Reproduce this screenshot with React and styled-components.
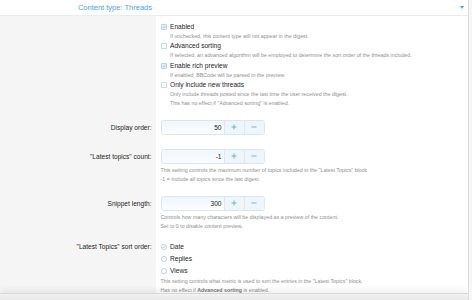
import React from "react";
import styled, { createGlobalStyle } from "styled-components";

const GlobalStyle = createGlobalStyle`
  html, body {
    margin: 0;
    padding: 0;
    background: #f6f6f6;
    font-family: "Liberation Sans", Arial, sans-serif;
  }
`;

const BLUE = "#47a5e6";

const Panel = styled.div`
  width: 468px;
  height: 300px;
  background: #fff;
  border-right: 1px solid #dcdcdc;
  display: flex;
  flex-direction: column;
  overflow: hidden;
`;

const Header = styled.div`
  display: grid;
  grid-template-columns: 156px 1fr;
  align-items: center;
  height: 15px;
  border-bottom: 1px solid #ececec;
  flex-shrink: 0;
`;

const HeaderTitle = styled.div`
  text-align: right;
  padding-right: 4px;
  font-size: 7.5px;
  color: ${BLUE};
`;

const Caret = styled.div`
  justify-self: end;
  margin-right: 4px;
  width: 0;
  height: 0;
  border-left: 2.5px solid transparent;
  border-right: 2.5px solid transparent;
  border-top: 3px solid ${BLUE};
`;

const Body = styled.div`
  flex: 1;
  background: linear-gradient(to right, #f5f5f5 156px, #fff 156px);
  overflow: hidden;
`;

const Row = styled.div`
  display: grid;
  grid-template-columns: 156px 1fr;
  padding: ${(p) => p.$pt ?? 6}px 0 ${(p) => p.$pb ?? 6}px;
`;

const Label = styled.div`
  text-align: right;
  padding-right: 4.5px;
  font-size: 6.6px;
  line-height: ${(p) => p.$lh || 15}px;
  color: #1d1d1d;
`;

const Field = styled.div`
  padding-left: 4.5px;
`;

const Choice = styled.div`
  display: flex;
  align-items: center;
  font-size: 6.6px;
  line-height: ${(p) => p.$lh || 10}px;
  color: #1d1d1d;
  margin-top: ${(p) => p.$mt || 0}px;
`;

const Mark = styled.svg`
  width: 6px;
  height: 6px;
  margin-right: 3.5px;
  flex-shrink: 0;
`;

const Hint = styled.div`
  font-size: 5.3px;
  line-height: 9px;
  color: #8f8f8f;
  margin-left: ${(p) => p.$indent || 0}px;
  white-space: nowrap;

  b {
    font-weight: bold;
    color: #777;
  }
`;

const Spinner = styled.div`
  display: flex;
  width: 104px;
  height: 15px;
  box-sizing: border-box;
  border: 1px solid #dae5ef;
  border-radius: 2.5px;
  overflow: hidden;
  margin-bottom: 2px;
`;

const SpinValue = styled.div`
  flex: 1;
  text-align: right;
  padding-right: 2px;
  font-size: 6.6px;
  line-height: 13px;
  color: #222;
  background: linear-gradient(#f1f6fb, #fbfdff);
`;

const SpinButton = styled.div`
  width: 19px;
  display: flex;
  align-items: center;
  justify-content: center;
  background: #eef5fb;
  border-left: 1px solid #dde8f2;
`;

const Footer = styled.div`
  height: 6px;
  flex-shrink: 0;
  border-top: 1px solid #d8d8d8;
  background: linear-gradient(#f1f1f1, #e9e9e9);
  box-shadow: 0 -3px 6px rgba(0, 0, 0, 0.07);
  position: relative;
`;

const Checkbox = ({ checked }) => (
  <Mark viewBox="0 0 12 12">
    <rect x="0.75" y="0.75" width="10.5" height="10.5" rx="1.5"
      fill={checked ? "#e6f1fb" : "#fff"} stroke="#7db2e0" strokeWidth="1.1" />
    {checked && (
      <path d="M3.2 6.2 L5.2 8.1 L8.9 4" fill="none" stroke="#5a9fd8" strokeWidth="1.1" />
    )}
  </Mark>
);

const Radio = ({ checked }) => (
  <Mark viewBox="0 0 12 12">
    <circle cx="6" cy="6" r="5.2" fill="#fff" stroke="#7db2e0" strokeWidth="1.1" />
    {checked && (
      <path d="M3.4 6.1 L5.3 8 L8.7 4.2" fill="none" stroke="#5a9fd8" strokeWidth="1.1" />
    )}
  </Mark>
);

const Plus = () => (
  <svg width="6" height="6" viewBox="0 0 6 6">
    <path d="M3 0.5 V5.5 M0.5 3 H5.5" stroke={BLUE} strokeWidth="0.8" />
  </svg>
);

const Minus = () => (
  <svg width="6" height="6" viewBox="0 0 6 6">
    <path d="M0.5 3 H5.5" stroke={BLUE} strokeWidth="0.8" />
  </svg>
);

const NumberBox = ({ value }) => (
  <Spinner>
    <SpinValue>{value}</SpinValue>
    <SpinButton><Plus /></SpinButton>
    <SpinButton><Minus /></SpinButton>
  </Spinner>
);

const options = [
  {
    label: "Enabled",
    checked: true,
    hints: ["If unchecked, this content type will not appear in the digest."],
  },
  {
    label: "Advanced sorting",
    checked: false,
    hints: [
      "If selected, an advanced algorithm will be employed to determine the sort order of the threads included.",
    ],
  },
  {
    label: "Enable rich preview",
    checked: true,
    hints: ["If enabled, BBCode will be parsed in the preview."],
  },
  {
    label: "Only include new threads",
    checked: false,
    hints: [
      "Only include threads posted since the last time the user received the digest.",
      'This has no effect if "Advanced sorting" is enabled.',
    ],
  },
];

const sortOrders = [
  { label: "Date", checked: true },
  { label: "Replies", checked: false },
  { label: "Views", checked: false },
];

export default function App() {
  return (
    <>
      <GlobalStyle />
      <Panel>
        <Header>
          <HeaderTitle>Content type: Threads</HeaderTitle>
          <Caret />
        </Header>

        <Body>
          <Row>
            <Label />
            <Field>
              {options.map((o, i) => (
                <div key={o.label}>
                  <Choice $mt={i ? 0.3 : 0}>
                    <Checkbox checked={o.checked} />
                    {o.label}
                  </Choice>
                  {o.hints.map((h) => (
                    <Hint key={h} $indent={9.5}>{h}</Hint>
                  ))}
                </div>
              ))}
            </Field>
          </Row>

          <Row>
            <Label>Display order:</Label>
            <Field>
              <NumberBox value="50" />
            </Field>
          </Row>

          <Row>
            <Label>"Latest topics" count:</Label>
            <Field>
              <NumberBox value="-1" />
              <Hint>This setting controls the maximum number of topics included in the "Latest Topics" block.</Hint>
              <Hint>-1 = Include all topics since the last digest.</Hint>
            </Field>
          </Row>

          <Row>
            <Label>Snippet length:</Label>
            <Field>
              <NumberBox value="300" />
              <Hint>Controls how many characters will be displayed as a preview of the content.</Hint>
              <Hint>Set to 0 to disable content preview.</Hint>
            </Field>
          </Row>

          <Row $pt={4} $pb={0}>
            <Label $lh={12}>"Latest Topics" sort order:</Label>
            <Field>
              {sortOrders.map((s) => (
                <Choice key={s.label} $lh={12}>
                  <Radio checked={s.checked} />
                  {s.label}
                </Choice>
              ))}
              <Hint>This setting controls what metric is used to sort the entries in the "Latest Topics" block.</Hint>
              <Hint>Has no effect if <b>Advanced sorting</b> is enabled.</Hint>
            </Field>
          </Row>
        </Body>

        <Footer />
      </Panel>
    </>
  );
}
